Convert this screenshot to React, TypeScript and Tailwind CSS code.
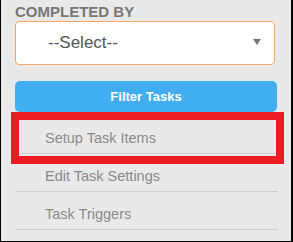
export default function App() {
  const items = ["Setup Task Items", "Edit Task Settings", "Task Triggers"];

  return (
    <div
      className="relative w-[293px] h-[242px] overflow-hidden bg-[#e9e9e9] border-l border-r-2 border-b border-black"
      style={{ fontFamily: '"Liberation Sans", Arial, sans-serif' }}
    >
      <div className="pl-[14px] pt-[3px] w-[277px]">
        {/* Completed by */}
        <div className="text-[15px] leading-[17px] font-bold text-[#777777] uppercase">Completed By</div>
        <div className="mt-px w-[260px] h-[44px] bg-white border border-[#f6a562] rounded-[4px] flex items-center justify-between pl-[32px] pr-[13px]">
          <span className="text-[17px] text-[#555]">--Select--</span>
          <svg width="8" height="6" viewBox="0 0 8 6" className="mt-[-2px]">
            <path d="M0 0 H8 L4 6 Z" fill="#777" />
          </svg>
        </div>

        {/* Filter button */}
        <button className="mt-[16px] w-[262px] h-[31px] rounded-[5px] bg-[#40aef0] text-white font-bold text-[13px] flex items-center justify-center">
          Filter Tasks
        </button>

        {/* Menu links */}
        <ul className="mt-[4px] w-[263px]">
          {items.map((item) => (
            <li key={item} className="pl-[30px] pt-[13px] pb-[6px] leading-[18px] text-[14.5px] text-[#8a8a8a] border-b border-[#cccccc]">
              {item}
            </li>
          ))}
        </ul>
      </div>

      {/* highlight annotation */}
      <div className="absolute left-[10px] top-[112px] w-[273px] h-[52px] border-[8px] border-[#ed1c24]" />
    </div>
  );
}
